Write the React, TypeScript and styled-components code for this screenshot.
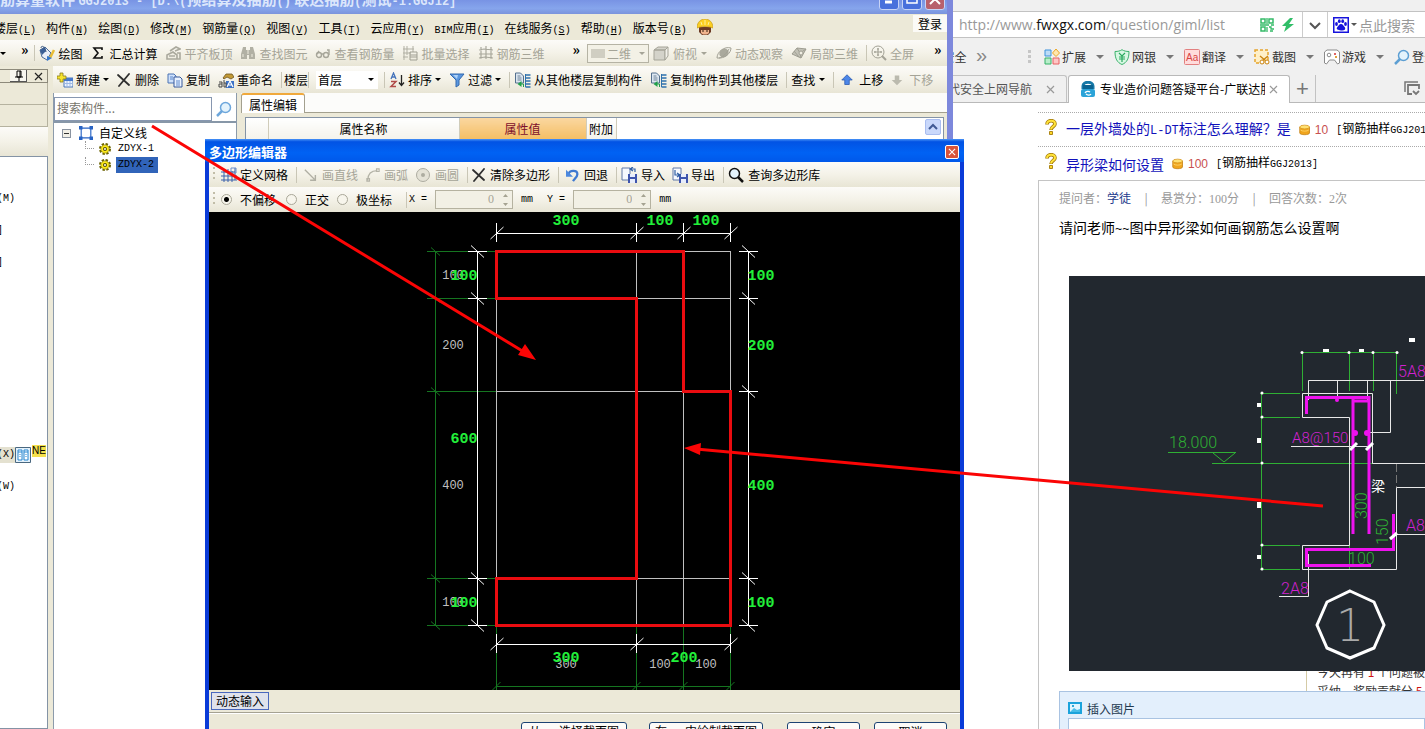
import React from "react";
import styled, { createGlobalStyle, css } from "styled-components";

const cjk = `"Noto Sans CJK SC", sans-serif`;
const mono = `"Liberation Mono", "Noto Sans CJK SC", monospace`;

const GlobalStyle = createGlobalStyle`
  *, *::before, *::after { box-sizing: border-box; }
  body { margin: 0; background: #fff; overflow: hidden; }
  body, button, input, select { font-family: ${cjk}; font-size: 12px; color: #000; }
  button { border: 0; padding: 0; margin: 0; background: none; white-space: nowrap; }
  svg { display: block; flex: none; }
`;

/* ---------- shared parts ---------- */

const Desktop = styled.div`
  position: relative;
  display: flex;
  height: 100vh;
  overflow: hidden;
  line-height: 16px;
  white-space: nowrap;
`;

const Latin = styled.span<{ $size?: number }>`
  font-family: ${mono};
  font-size: ${(p) => p.$size ?? 10}px;
`;

const Digits = styled.span`
  font-family: "Liberation Serif", serif;
`;

const barFill = css`
  background: linear-gradient(#fcfbf8, #f4f2e8 50%, #e8e5d5);
`;

const Toolbar = styled.div<{ $height: number; $left?: number }>`
  ${barFill}
  display: flex;
  align-items: center;
  flex: none;
  height: ${(p) => p.$height}px;
  padding-left: ${(p) => p.$left ?? 4}px;
`;

const ToolButton = styled.button<{ $muted?: boolean; $after?: number; $gap?: number }>`
  display: flex;
  align-items: center;
  flex: none;
  gap: ${(p) => p.$gap ?? 3}px;
  margin-right: ${(p) => p.$after ?? 8}px;
  color: ${(p) => (p.$muted ? "#a5a497" : "#000")};
`;

const Divider = styled.span<{ $after?: number }>`
  flex: none;
  width: 1px;
  height: 16px;
  margin-right: ${(p) => p.$after ?? 4}px;
  background: #c9c6b6;
`;

const Caret = styled.span<{ $color?: string; $wide?: boolean }>`
  flex: none;
  width: 0;
  border: ${(p) => (p.$wide ? 4 : 3)}px solid transparent;
  border-top-color: ${(p) => p.$color ?? "#000"};
  border-bottom: 0;
`;

const More = styled.button<{ $before?: number; $after?: number }>`
  flex: none;
  margin: 0 ${(p) => p.$after ?? 0}px 8px ${(p) => p.$before ?? 0}px;
  font-weight: 700;
  font-size: 14px;
  line-height: 14px;
`;

const Grip = styled.span`
  flex: none;
  width: 2px;
  height: 15px;
  margin-right: 6px;
  background: repeating-linear-gradient(#c1bda8 0 2px, transparent 2px 5px);
`;

/* ---------- icons ---------- */

type IconProps = { children: React.ReactNode; w?: number; h?: number; box?: string };
const Icon = ({ children, w = 16, h = 16, box = "0 0 16 16" }: IconProps) => (
  <svg width={w} height={h} viewBox={box} fill="none" aria-hidden="true">
    {children}
  </svg>
);

const PaintIcon = () => (
  <Icon>
    <path d="M1 5 6 2l6 6-4 7-5-3z" fill="#e8eef8" stroke="#4c6c98" />
    <path d="M1 5 6 2l1 4-4 4z" fill="#3a5f96" />
    <path d="M2 3c0-3 4-2 5 4" stroke="#38557e" />
    <path d="m11 13 4-8" stroke="#e9bd36" strokeWidth="2.500" />
    <path d="m8 11 5 2-5 3z" fill="#3276cb" />
  </Icon>
);
const SigmaIcon = () => (
  <Icon>
    <path d="M12 5V3H4l4 5-4 5h8v-2" stroke="#111" strokeWidth="1.600" />
  </Icon>
);
const AlignTopIcon = () => (
  <Icon>
    <path d="M2 14h10v-4L8 7l-6 3zM5 6l6-4 4 2-5 2M12 8h3v6h-3" stroke="#aaa99d" strokeWidth="1.600" />
    <path d="M4 10h6v2H4z" fill="#bdbcb1" />
  </Icon>
);
const BinocularIcon = () => (
  <Icon>
    <path d="M3 2h3v3h4V2h3l2 7v5H9v-4H7v4H1V9z" fill="#b1b0a4" />
    <path d="M3 9v3M12 9v3M8 5v4" stroke="#eeecdf" />
  </Icon>
);
const GlassesIcon = () => (
  <Icon>
    <circle cx="4" cy="10" r="2.500" stroke="#a7a69a" strokeWidth="1.400" />
    <circle cx="11" cy="10" r="2.500" stroke="#a7a69a" strokeWidth="1.400" />
    <path d="M6 9h3M14 10V5h-2M2 9l2-3" stroke="#a7a69a" strokeWidth="1.400" />
  </Icon>
);
const BatchIcon = () => (
  <Icon>
    <path d="M2 1v14M5 1v9M1 4h11M1 8h8M11 1v6M1 12h5" stroke="#b0afa3" />
    <path d="M8 7h7v8H8zM8 10h7M8 12h7" stroke="#a09f93" />
  </Icon>
);
const RebarIcon = () => (
  <Icon>
    <path d="M3 2v12M8 1v13M13 2v12M1 5l5-1 9 1M1 9h14M1 13l6-1 8 1" stroke="#a9a89c" strokeWidth="1.200" />
  </Icon>
);
const CubeIcon = () => (
  <Icon>
    <path d="m1 5 4-3h10l-3 3zM1 5h11v10H1z" fill="#d4d3ca" stroke="#a5a498" />
    <path d="m12 5 3-3v9l-3 4z" fill="#f1f0e9" stroke="#a5a498" />
  </Icon>
);
const OrbitIcon = () => (
  <Icon>
    <ellipse cx="8" cy="8" rx="5" ry="4" fill="#aaa99d" transform="rotate(-35 8 8)" />
    <path d="M1 13C1 7 8 1 15 3c0 5-6 11-14 10M3 13c4-1 8-5 10-9" stroke="#a2a195" />
  </Icon>
);
const LocalIcon = () => (
  <Icon>
    <path d="m1 9 5-6 9 1-5 9z" fill="#c2c1b6" stroke="#9e9d91" />
    <path d="m6 3 3 5 6-4M9 8l1 5M3 6l5 6" stroke="#a09f93" />
    <circle cx="10" cy="8" r="2" fill="#f0eee3" stroke="#a09f93" />
  </Icon>
);
const FullIcon = () => (
  <Icon>
    <circle cx="7" cy="7" r="6" stroke="#a3a296" />
    <path d="M7 3v8M3 7h8M6 4h2M6 10h2M4 6v2M10 6v2" stroke="#a3a296" strokeWidth="1.200" />
    <path d="m11 11 4 4" stroke="#a3a296" strokeWidth="2" />
  </Icon>
);
const NewIcon = () => (
  <Icon>
    <path d="M7 6h9v9H7z" fill="#edf4ff" stroke="#4a76bb" />
    <path d="M7 6h9v3H7z" fill="#4779cc" />
    <path d="M7 11.500h9M10 9v6M13 9v6" stroke="#9db8e4" />
    <path d="M3 1h3v3h3v3H6v3H3V7H0V4h3z" fill="#f6e32d" stroke="#8b7c1c" strokeWidth=".8" />
  </Icon>
);
const CrossIcon = () => (
  <Icon w={14} h={14} box="1 1 14 14">
    <path d="m2 3 11 10M13 2 3 14" stroke="#2f2f2f" strokeWidth="1.800" strokeLinecap="round" />
  </Icon>
);
const CopyIcon = () => (
  <Icon>
    <path d="M1 2h6l2 2v7H1z" fill="#cfe1fb" stroke="#4b73b3" />
    <path d="M7 5h6l2 2v8H7z" fill="#eaf2ff" stroke="#36599b" />
    <path d="M3 5h3M3 7h3M9 9h4M9 11h4M9 13h4" stroke="#5d88cc" />
  </Icon>
);
const RenameIcon = () => (
  <Icon>
    <path d="M5 6 8 2l6 0 2 3-3 2-4-2-3 2z" fill="#c39a36" stroke="#6c531d" strokeWidth=".8" />
    <path d="M8 9h8v7H8z" fill="#3d73c8" />
    <path d="m9 15 3-6 3 6M10 13h4" stroke="#fff" strokeWidth="1.200" />
    <path d="M1 10h3v5H1v-3h3M6 8v7M6 11h2v4H6" stroke="#474747" />
  </Icon>
);
const SortIcon = () => (
  <Icon>
    <path d="m2 7 2.500-6L7 7M3 5h3" stroke="#4573bb" strokeWidth="1.300" />
    <path d="M2 9.500h5l-5 5h5" stroke="#b04b49" strokeWidth="1.500" />
    <path d="M12.500 3v10M10 10.500l2.500 3 2.500-3" stroke="#222" strokeWidth="1.300" />
  </Icon>
);
const FilterIcon = () => (
  <Icon>
    <path d="M1 2h14l-5 6v5l-3 2V8z" fill="#5b97df" stroke="#3268ae" />
    <path d="M4 3h5L8 7z" fill="#aed2f8" />
  </Icon>
);
const FloorCopyIcon = () => (
  <Icon w={17}>
    <path d="M1 1h5l3 3v7H1z" fill="#dce6f0" stroke="#55708e" />
    <path d="M3 4h3M3 6h4M3 8h4" stroke="#6d8298" />
    <path d="M11 3h5M11 6h5M11 9h5M11 12h5M11 15h5" stroke="#2f71ad" strokeWidth="1.600" />
    <path d="M11 2v13" stroke="#2f71ad" />
    <path d="M7 15V9l-4 3z" fill="#21a04b" />
    <path d="M5 12h4v3" stroke="#21a04b" />
  </Icon>
);
const ArrowIcon = ({ down }: { down?: boolean }) => (
  <Icon w={12} h={12}>
    {down ? (
      <path d="M5 2h6v6h4l-7 7-7-7h4z" fill="#bbbaae" />
    ) : (
      <path d="m8 1 7 7h-4v6H5V8H1z" fill="#4c86e8" stroke="#2556ad" />
    )}
  </Icon>
);
const WorkerIcon = () => (
  <Icon>
    <path d="M2 8h12v5l-3 3H5l-3-3z" fill="#6b3a24" />
    <path d="M4 11h8v3l-2 1.500H6L4 14z" fill="#f0b48d" />
    <path d="M0 9c0-12 16-12 16 0-5-2-11-2-16 0z" fill="#fbcf22" stroke="#c79a14" strokeWidth=".7" />
    <path d="M8 1v5M4 3l1 3M12 3l-1 3" stroke="#fdf09b" />
    <path d="M6 11v2M10 11v2" stroke="#321" />
  </Icon>
);
const MagnifierIcon = ({ color = "#111", handle = "right" }: { color?: string; handle?: string }) => (
  <Icon>
    <g transform={handle === "left" ? "matrix(-1 0 0 1 16 0)" : undefined}>
      <circle cx="6.500" cy="6.500" r="5" fill="#e4f3fc" stroke={color} strokeWidth="1.500" />
      <path d="m10 10 5 5" stroke={color} strokeWidth="2.500" />
    </g>
  </Icon>
);
const GearIcon = () => (
  <Icon w={12} h={12}>
    <circle cx="8" cy="8" r="6.500" stroke="#6b6200" strokeWidth="3" strokeDasharray="3.100 2" />
    <circle cx="8" cy="8" r="5.500" fill="#ffec1c" stroke="#8a7f00" strokeWidth=".8" />
    <circle cx="8" cy="8" r="2" fill="#fff" stroke="#554d00" strokeWidth="1.400" />
  </Icon>
);
const NodeBoxIcon = () => (
  <Icon w={14} h={14}>
    <path d="M2.500 2.500h11v11h-11z" stroke="#2763c4" strokeWidth="1.300" />
    <path d="M0 0h4v4H0zM12 0h4v4h-4zM0 12h4v4H0zM12 12h4v4h-4z" fill="#2763c4" />
  </Icon>
);
const GridIcon = () => (
  <Icon>
    <path d="M3 2v13M7 2v13M11 4v11M14 1v12M0 5h14M0 9h16M0 13h16" stroke="#3b61a9" />
    <path d="M10 1h5v5h-5z" stroke="#6a8cc9" />
  </Icon>
);
const LineToolIcon = () => (
  <Icon w={14} h={14}>
    <path d="m1 2 11 11M13 8v6H7" stroke="#b0afa3" strokeWidth="1.600" />
  </Icon>
);
const ArcToolIcon = () => (
  <Icon w={14} h={14}>
    <path d="M2 14C2 7 6 3 13 3M1 12h3v3H1zM12 1h3v3h-3z" stroke="#b4b3a7" strokeWidth="1.300" />
  </Icon>
);
const CircleToolIcon = () => (
  <Icon>
    <circle cx="8" cy="8" r="6.500" fill="#e4e2d6" stroke="#adaca0" />
    <circle cx="8" cy="8" r="2" fill="#adaca0" />
  </Icon>
);
const UndoIcon = () => (
  <Icon w={14} h={14}>
    <path d="M3 7c1-5 10-5 10 0 0 3-3 5-5 8" stroke="#3f79d0" strokeWidth="2.600" />
    <path d="M0 2v8h8z" fill="#4c88de" />
  </Icon>
);
const DiskIcon = ({ out }: { out?: boolean }) => (
  <Icon>
    <path d="M1 1h8v12H1z" fill="#f6f9ff" stroke="#6079a8" />
    <path d="M7 7h9v9H7z" fill="#3e54ad" />
    <path d="M9 7h5v3H9zM9 12h5v4H9z" fill="#e8edfb" />
    <path d={out ? "M3 3v5h4M5 6l3 2-3 2" : "M14 5V2h-4M12 0l-3 2 3 2"} stroke="#315fa5" strokeWidth="1.200" />
  </Icon>
);
const QuestionIcon = () => (
  <Icon w={12} h={16} box="0 0 12 16">
    <g strokeLinejoin="round">
      <path d="M2 5.500C2 .5 10 .5 10 5c0 2.500-4 2.500-4 6" stroke="#a47b08" strokeWidth="3.600" />
      <path d="M2 5C2.500.8 10 .8 10 5c0 2.500-4 2.500-4 5.500" stroke="#ffe23a" strokeWidth="2" />
    </g>
    <path d="M4.500 12.500h3v3h-3z" fill="#ffd928" stroke="#a47b08" strokeWidth=".9" />
  </Icon>
);
const CoinIcon = () => (
  <Icon w={12} h={12}>
    <path d="M1 4v8c0 3 13 3 13 0V4z" fill="#f0a51d" stroke="#c27c0e" />
    <ellipse cx="7.500" cy="4" rx="6.500" ry="2.500" fill="#ffe071" stroke="#d6941b" />
    <path d="M2 8c2 2 9 2 11 0" stroke="#ffdc78" />
  </Icon>
);
const QrIcon = () => (
  <Icon w={14} h={14} box="0 0 14 14">
    <path d="M1 1h4v4H1zM9 1h4v4H9zM1 9h4v4H1z" stroke="#35ba68" strokeWidth="1.500" />
    <path d="M7 0v6M0 7h9M7 9v5M9 9h2v2h3M10 13h3M11 7h3" stroke="#35ba68" strokeWidth="1.300" />
  </Icon>
);
const BoltIcon = () => (
  <Icon w={14} h={14} box="0 0 14 14">
    <path d="M9 0 1 8h4l-2 6 10-8H8l4-6z" fill="#31be68" />
  </Icon>
);
const ChevronIcon = () => (
  <Icon w={14} h={14} box="0 0 14 14">
    <path d="m2 5 5 5 5-5" stroke="#555" strokeWidth="2" />
  </Icon>
);
const PawIcon = () => (
  <Icon>
    <path d="M.75.75h14.500v14.500H.75z" fill="#fff" stroke="#1713dc" strokeWidth="1.500" />
    <g fill="#1713dc">
      <ellipse cx="3.500" cy="7" rx="1.400" ry="1.900" />
      <ellipse cx="6.300" cy="4.200" rx="1.400" ry="1.900" />
      <ellipse cx="9.700" cy="4.200" rx="1.400" ry="1.900" />
      <ellipse cx="12.500" cy="7" rx="1.400" ry="1.900" />
      <path d="M8 7c2 0 2.500 2 4 3.500 1 2-1 3.500-4 3s-5-1-4-3C5.500 9 6 7 8 7z" />
    </g>
  </Icon>
);
const ExtendIcon = () => (
  <Icon>
    <path d="M1 1h6v6H1z" fill="#bcdcf7" stroke="#3c93dc" />
    <path d="M1 9h6v6H1z" fill="#b8edca" stroke="#35b266" />
    <path d="M9 9h6v6H9z" fill="#ffc6c6" stroke="#e66262" />
    <path d="m12 0 3.500 4L12 7.500 8.500 4z" fill="#ffe7ae" stroke="#eaa627" />
  </Icon>
);
const BankIcon = () => (
  <Icon>
    <path d="M8 .7c2 1.300 4 1.800 7 1.800 0 7-2 11-7 13C3 13.500 1 9.500 1 2.500 4 2.500 6 2 8 .7z" fill="#d8f7e3" stroke="#3bb36c" />
    <path d="m5 4 3 3 3-3M8 7v6M5 8h6M5 10h6" stroke="#2aa95e" strokeWidth="1.200" />
  </Icon>
);
const TranslateIcon = () => (
  <Icon>
    <rect x=".5" y=".5" width="15" height="15" rx="1" fill="#ffdcdc" stroke="#e28080" />
    <text x="2" y="12" fontFamily="Liberation Sans" fontSize="10" fill="#d84444">Aa</text>
  </Icon>
);
const CropIcon = () => (
  <Icon>
    <path d="M1 1h13v13H1z" fill="#fff0c8" stroke="#e5a42c" strokeDasharray="3 2" strokeWidth="1.500" />
    <path d="m6 7 6 5M14 7l-6 5" stroke="#cb8511" strokeWidth="1.400" />
    <circle cx="8" cy="13" r="2" fill="#fff" stroke="#cb8511" />
    <circle cx="13" cy="13" r="2" fill="#fff" stroke="#cb8511" />
  </Icon>
);
const GameIcon = () => (
  <Icon>
    <path d="M3 1h10l2.500 2v11l-2 1-3-4h-5l-3 4-2-1V3z" fill="#fff" stroke="#8b8b8b" />
    <circle cx="5" cy="6" r="1.800" stroke="#8b8b8b" />
    <path d="M10 4h2v2h-2z" fill="#e06464" />
    <path d="M11 7h2v2h-2z" fill="#e4a13b" />
  </Icon>
);
const SiteIcon = () => (
  <Icon>
    <path d="M3 8V5c0-5 10-5 10 0v3" stroke="#1679a8" strokeWidth="3" />
    <path d="M3 4h10v5H3z" fill="#0b6492" />
    <rect x="1" y="8" width="14" height="8" rx="2" fill="#2ba3d8" />
    <path d="M5 12c1-2 4-2 5-1M11 13c-1 2-4 1-5 0" stroke="#fff" strokeWidth="1.200" />
  </Icon>
);
const TabListIcon = () => (
  <Icon>
    <path d="M1 11V1h13" stroke="#777" strokeWidth="1.500" />
    <path d="M8 13H4V4h11v4" stroke="#777" strokeWidth="1.800" />
    <path d="m9 10 3 3 3-3" stroke="#777" strokeWidth="1.800" />
  </Icon>
);
const PictureIcon = () => (
  <Icon w={14} h={12} box="0 0 14 12">
    <path d="M1 1h12v10H1z" fill="#dff5ff" stroke="#1ba3dc" strokeWidth="2" />
    <path d="m2 10 4-4 3 2 3-1v3z" fill="#48bde9" />
    <path d="M4 3h2v2H4z" fill="#2ca7d8" />
  </Icon>
);
const PinIcon = () => (
  <Icon w={10} h={12} box="0 0 10 12">
    <path d="M3 1h4v6H3zM1 7h8M5 7v4M6 1v6" stroke="#000" />
  </Icon>
);
const SmallCross = ({ color = "#222", size = 9 }: { color?: string; size?: number }) => (
  <Icon w={size} h={size} box="0 0 9 9">
    <path d="m1 1 7 7M8 1 1 8" stroke={color} strokeWidth="1.200" />
  </Icon>
);
const LibraryIcon = () => (
  <Icon>
    <path d="M.5.5h15v15H.5z" fill="#e3f1fb" stroke="#49677f" />
    <path d="M3 3h4v10H3zM9 3h4v10H9z" fill="#fff" stroke="#2585d0" />
    <path d="M3 5h4M9 5h4M5 7v1M5 9v1M11 7v1M11 9v1" stroke="#2585d0" />
  </Icon>
);

/* ---------- main window ---------- */

const MainWindow = styled.section`
  display: flex;
  flex-direction: column;
  flex: none;
  width: 953px;
  background: #ece9d8;
  border-right: 6px solid #7d88dc;
  overflow: hidden;
`;

const TitleBar = styled.header`
  display: flex;
  align-items: flex-end;
  flex: none;
  height: 14px;
  margin-right: -6px;
  padding-right: 8px;
  overflow: hidden;
  background: linear-gradient(#7893e4, #86a5ec 60%, #7a93dc);
  color: #dbe6fb;
  font-size: 15px;
  font-weight: 700;
  line-height: 20px;
`;

const TitleText = styled.span`
  flex: 1;
  padding-bottom: 2px;
`;

const FrameButton = styled.button<{ $danger?: boolean }>`
  display: flex;
  align-items: flex-end;
  justify-content: center;
  width: 20px;
  height: 20px;
  margin: 0 0 4px 3px;
  padding-bottom: 4px;
  border: 1px solid #c7d3f6;
  border-radius: 3px;
  background: ${(p) => (p.$danger ? "#b8606c" : "#4870dc")};
`;

const MenuBar = styled.nav`
  display: flex;
  align-items: center;
  flex: none;
  gap: 10px;
  height: 26px;
  margin-left: -6px;
`;

const SignIn = styled.button`
  align-self: stretch;
  margin: 1px 0 8px auto;
  padding: 0 5px;
  background: #fbfaf6;
`;

const ViewSelect = styled.select`
  appearance: none;
  width: 62px;
  height: 19px;
  margin-right: 4px;
  padding: 0 0 0 19px;
  border: 1px solid #b5b3a4;
  background: linear-gradient(#d0cec2, #d0cec2) 3px 4px / 14px 9px no-repeat, #f3f1e6;
  color: #a5a497;
  opacity: 1;
`;

const SelectWrap = styled.span<{ $after?: number }>`
  display: flex;
  align-items: center;
  flex: none;
  position: relative;
  margin-right: ${(p) => p.$after ?? 0}px;
`;

const SelectCaret = styled.span<{ $right?: number }>`
  position: absolute;
  right: ${(p) => p.$right ?? 4}px;
  display: flex;
  pointer-events: none;
`;

const FloorSelect = styled.select`
  appearance: none;
  width: 62px;
  height: 18px;
  padding: 0 2px;
  border: 0;
  background: #fff;
`;

const Workspace = styled.div`
  display: flex;
  flex: 1;
  min-height: 0;
`;

const Dock = styled.aside`
  display: flex;
  flex-direction: column;
  width: 48px;
  margin-right: 5px;
  padding-top: 3px;
`;

const DockHead = styled.div`
  display: flex;
  align-items: center;
  justify-content: flex-end;
  gap: 7px;
  height: 14px;
  padding-right: 4px;
  border: 1px solid #8d8a7b;
  border-left: 0;
`;

const DockPin = styled.button`
  width: 17px;
  height: 12px;
  padding-left: 4px;
  border: 1px solid #555;
  border-width: 0 1px 1px 0;
  background: #f7f6ef;
`;

const DockStrip = styled.div`
  height: 22px;
  border: 1px solid #b5b29f;
  border-width: 0 1px 1px 0;
`;

const DockBand = styled.div`
  ${barFill}
  height: 29px;
`;

const DockList = styled.ul`
  flex: 1;
  margin: 0;
  padding: 26px 0 0;
  list-style: none;
  background: #fff;
  border: 1px solid #8493a5;
  border-left: 0;
  overflow: hidden;
`;

const DockItem = styled.li<{ $active?: boolean }>`
  display: flex;
  align-items: center;
  height: 32px;
  & > span:first-child {
    width: 18px;
    margin-left: -3px;
    background: ${(p) => (p.$active ? "#e4e1d0" : "transparent")};
  }
`;

const NewBadge = styled.b`
  align-self: flex-start;
  margin: 6px 0 0 1px;
  background: #f5e04c;
  font: 10px/12px "Liberation Sans", sans-serif;
`;

const Editor = styled.div`
  display: flex;
  flex-direction: column;
  flex: 1;
  min-width: 0;
`;

const Panels = styled.div`
  display: flex;
  flex: 1;
  min-height: 0;
`;

const TreePanel = styled.div`
  width: 184px;
  padding-top: 4px;
  background: #fff;
  border: 1px solid #8c9bab;
  border-width: 0 1px;
`;

const SearchRow = styled.form`
  display: flex;
  align-items: center;
  gap: 4px;
  height: 26px;
  border-bottom: 2px solid #8797a8;
`;

const SearchInput = styled.input`
  width: 158px;
  height: 24px;
  padding: 0 2px 4px;
  border: 1px solid #8797b0;
  outline: 0;
  &::placeholder { color: #77756c; opacity: 1; }
`;

const Tree = styled.ul`
  margin: 0;
  padding: 0 0 0 8px;
  list-style: none;
`;

const TreeRoot = styled.div`
  display: flex;
  align-items: center;
  height: 18px;
  padding-top: 2px;
`;

const Expander = styled.button`
  width: 9px;
  height: 9px;
  margin-right: 8px;
  border: 1px solid #8a93a0;
  background: linear-gradient(#333, #333) center / 5px 1px no-repeat, #f1efe6;
`;

const RootLabel = styled.span`
  margin-left: 6px;
`;

const Branch = styled.ul`
  margin: 0 0 0 23px;
  padding: 0;
  list-style: none;
`;

const Leaf = styled.li`
  display: flex;
  align-items: center;
  height: 16px;
  gap: 5px;
  &::before {
    content: "";
    width: 9px;
    height: 8px;
    align-self: flex-start;
    border: 1px dotted #999;
    border-width: 0 0 1px 1px;
  }
`;

const LeafName = styled.span<{ $selected?: boolean }>`
  padding: 0 4px 0 2px;
  font: 10px/16px ${mono};
  background: ${(p) => (p.$selected ? "#3164b9" : "transparent")};
`;

const PropertyPanel = styled.div`
  display: flex;
  flex-direction: column;
  flex: 1;
  margin-left: 4px;
`;

const TabStrip = styled.div`
  display: flex;
  height: 20px;
  background: #fcfcfa;
  border-bottom: 1px solid #a3a08f;
`;

const Tab = styled.button`
  height: 20px;
  padding: 0 7px;
  background: #fff;
  border: 1px solid #a3a08f;
  border-top: 2px solid #f0a93c;
  border-bottom: 0;
  border-radius: 3px 3px 0 0;
`;

const SheetFrame = styled.div`
  display: flex;
  justify-content: space-between;
  align-items: flex-start;
  flex: 1;
  margin: 4px 3px 0 4px;
  padding-right: 2px;
  background: #fff;
  border: 1px solid #8493a5;
`;

const Sheet = styled.table`
  border-collapse: collapse;
  table-layout: fixed;
  width: 370px;
`;

const HeadCell = styled.th<{ $w: number; $hot?: boolean }>`
  width: ${(p) => p.$w}px;
  height: 22px;
  padding: 0;
  font-weight: 400;
  border-right: 1px solid #d0ccba;
  color: ${(p) => (p.$hot ? "#7d0f2c" : "#000")};
  background: ${(p) => (p.$hot ? "linear-gradient(#fad7a0, #f4bd62)" : "linear-gradient(#fff, #f4f2ea)")};
`;

const ScrollUp = styled.button`
  display: flex;
  align-items: center;
  justify-content: center;
  width: 16px;
  height: 16px;
  margin-top: 1px;
  border: 1px solid #a9bdf0;
  border-radius: 2px;
  background: #c9d8fb;
`;

/* ---------- polygon dialog ---------- */

const Dialog = styled.section`
  position: absolute;
  left: 205px;
  top: 139px;
  bottom: 0;
  width: 759px;
  display: flex;
  flex-direction: column;
  background: #ece9d8;
  border: 4px solid #0a3bd8;
  border-width: 0 4px;
`;

const DialogTitle = styled.header`
  display: flex;
  align-items: center;
  justify-content: space-between;
  flex: none;
  height: 23px;
  margin: 0 -4px;
  padding: 2px 5px 0 4px;
  background: linear-gradient(#4a94f7, #0253e4 12%, #0062f4 60%, #0058ea);
  color: #fff;
  font-size: 13px;
  font-weight: 700;
`;

const CloseButton = styled.button`
  display: flex;
  align-items: center;
  justify-content: center;
  width: 14px;
  height: 14px;
  border: 1px solid #fff;
  border-radius: 2px;
  background: #d9533a;
`;

const Choice = styled.label<{ $after: number }>`
  display: flex;
  align-items: center;
  gap: 8px;
  margin-right: ${(p) => p.$after}px;
`;

const Radio = styled.input`
  appearance: none;
  width: 11px;
  height: 11px;
  margin: 0;
  border: 1px solid #a9a798;
  border-radius: 50%;
  background: #f7f5ec;
  &:checked {
    background: radial-gradient(circle, #000 0 2px, #f7f5ec 3px);
  }
`;

const Field = styled.label`
  display: flex;
  align-items: center;
  gap: 8px;
  margin-right: 14px;
  white-space: pre;
`;

const Spin = styled.span`
  display: flex;
  align-items: center;
  width: 78px;
  height: 19px;
  padding-right: 3px;
  border: 1px solid #b5b2a0;
  background: #f2f0e5;
`;

const SpinInput = styled.input`
  flex: 1;
  min-width: 0;
  height: 16px;
  padding: 0 8px 0 0;
  border: 0;
  background: none;
  color: #a5a497;
  text-align: right;
  font-family: "Liberation Serif", serif;
`;

const Drawing = styled.div`
  flex: 1 1 477px;
  min-height: 0;
  max-height: 478px;
  overflow: hidden;
  background: #000;
`;

const StatusRow = styled.div`
  flex: none;
  height: 23px;
  padding: 2px;
  border-bottom: 1px solid #a5a292;
  box-shadow: 0 1px #fff;
`;

const DynamicInput = styled.button`
  height: 18px;
  padding: 0 4px;
  border: 1px solid #4a68bd;
  background: #dfe2ec;
  line-height: 16px;
`;

const ActionRow = styled.div`
  display: flex;
  justify-content: flex-end;
  flex: none;
  height: 16px;
  padding: 9px 13px 0 0;
  overflow: hidden;
`;

const ActionButton = styled.button<{ $w: number; $after?: number }>`
  width: ${(p) => p.$w}px;
  height: 20px;
  margin-right: ${(p) => p.$after ?? 0}px;
  border: 1px solid #1c4373;
  border-radius: 3px;
  background: #fcfbf8;
  line-height: 16px;
`;

/* ---------- browser ---------- */

const Browser = styled.section`
  display: flex;
  flex-direction: column;
  flex: 1;
  min-width: 0;
  background: #fff;
  overflow: hidden;
`;

const Chrome = styled.div`
  flex: none;
  padding-top: 11px;
  background: #f0f0f0;
`;

const AddressBar = styled.div`
  display: flex;
  align-items: center;
  height: 27px;
  padding-left: 6px;
  background: #fff;
  border: 1px solid #c2c2c2;
  border-width: 1px 0;
`;

const Url = styled.span`
  flex: none;
  width: 301px;
  font: 14px/20px "Open Sans", sans-serif;
  color: #999;
  & > b { font-weight: 400; color: #111; }
`;

const BarLine = styled.span`
  align-self: stretch;
  width: 1px;
  margin: 0 5px;
  background: #ccc;
`;

const BarButton = styled.button<{ $after: number }>`
  flex: none;
  margin-right: ${(p) => p.$after}px;
`;

const Prompt = styled.span`
  margin-left: 2px;
  font-size: 14px;
  color: #999;
`;

const Bookmarks = styled.div`
  display: flex;
  align-items: center;
  height: 37px;
  color: #333;
`;

const BookmarkTail = styled.button`
  flex: none;
  width: 25px;
  margin-left: -11px;
  color: #333;
`;

const Chevrons = styled.button`
  flex: none;
  width: 52px;
  margin-left: 9px;
  text-align: left;
  font: 20px/20px "Liberation Sans", sans-serif;
  color: #888;
  padding-bottom: 4px;
`;

const Bookmark = styled.button`
  display: flex;
  align-items: center;
  flex: none;
  width: 70px;
  gap: 2px;
  color: #333;
  & > span:last-child { margin-left: 8px; }
`;

const Dots = styled.span`
  flex: none;
  width: 3px;
  height: 13px;
  margin-right: 13px;
  background: repeating-linear-gradient(#c6c6c6 0 3px, transparent 3px 5px);
`;

const Tabs = styled.div`
  display: flex;
  align-items: center;
  height: 28px;
  border-bottom: 1px solid #b9b9b9;
`;

const BackTab = styled.div`
  display: flex;
  align-items: center;
  align-self: stretch;
  justify-content: space-between;
  width: 114px;
  padding-right: 11px;
  border: 1px solid #c2c2c2;
  border-width: 1px 1px 0 0;
  border-radius: 0 3px 0 0;
  color: #555;
  & > span { margin-left: -5px; }
`;

const FrontTab = styled.div`
  display: flex;
  align-items: center;
  width: 222px;
  height: 28px;
  margin-left: 1px;
  padding: 0 11px;
  gap: 4px;
  background: #fff;
  border: 1px solid #b9b9b9;
  border-bottom: 0;
  border-radius: 3px 3px 0 0;
`;

const TabTitle = styled.span`
  flex: 1;
  overflow: hidden;
`;

const AddTab = styled.button`
  width: 26px;
  height: 27px;
  border-right: 1px solid #c2c2c2;
  font: 22px/24px "Liberation Sans", sans-serif;
  color: #777;
`;

const TabList = styled.button`
  margin: 0 5px 0 auto;
`;

const Page = styled.main`
  display: flex;
  flex-direction: column;
  flex: 1;
  min-height: 0;
  margin-left: 85px;
  padding-top: 9px;
`;

const Question = styled.div`
  display: flex;
  align-items: center;
  flex: none;
  height: 34px;
  padding-left: 7px;
  border-top: 1px dotted #aaa;
  & > * { flex: none; }
  & > svg:first-child { margin-bottom: 6px; }
`;

const QuestionLink = styled.a`
  margin: 0 8px 0 9px;
  font-size: 14px;
  color: #1111bb;
  text-decoration: none;
`;

const Points = styled.span`
  margin: 0 8px 0 4px;
  font-family: "Liberation Sans", sans-serif;
  color: #c85050;
`;

const Detail = styled.article`
  display: flex;
  flex-direction: column;
  flex: 1;
  min-height: 0;
  padding: 9px 0 0 20px;
  border: 1px solid #c4c4c4;
  border-width: 1px 0 0 1px;
`;

const Meta = styled.p`
  flex: none;
  margin: 0;
  color: #999;
  & > a { color: #223a8c; text-decoration: none; }
  & > i {
    display: inline-block;
    width: 30px;
    font-style: normal;
    text-align: center;
  }
`;

const Body = styled.p`
  flex: none;
  margin: 10px 0 0;
  font-size: 14px;
  line-height: 20px;
`;

const Figure = styled.figure`
  flex: none;
  height: 395px;
  margin: 36px 0 0 10px;
  overflow: hidden;
  background: #22282f;
`;

const Notice = styled.aside`
  align-self: flex-end;
  flex: none;
  width: 119px;
  height: 20px;
  padding-left: 10px;
  overflow: hidden;
  border-left: 1px solid #d5cba6;
  color: #333;
  line-height: 17px;
  & > div { margin-top: -8px; }
  & > div + div { margin-top: 2px; }
  & b { font-weight: 400; color: #d01414; }
`;

const Reply = styled.div`
  flex: 1;
  padding: 0 0 0 8px;
  background: #e3effc;
  border: 1px solid #a9c3e2;
  border-width: 1px 0 0 1px;
`;

const InsertPicture = styled.button`
  display: flex;
  align-items: center;
  gap: 5px;
  height: 32px;
  color: #243a50;
`;

const ReplyBox = styled.div`
  height: 40px;
  margin-top: -6px;
  background: #fff;
  border: 1px solid #a9c3e2;
`;

const Annotations = styled.svg`
  position: absolute;
  left: 0;
  top: 0;
  pointer-events: none;
`;

/* ---------- drawings ---------- */

const XS = [496.5, 636.5, 683.5, 730.5];
const YS = [251.5, 298.5, 391.5, 578.5, 625.5];

const green: [number, number, string][] = [
  [566, 225, "300"], [660, 225, "100"], [706, 225, "100"],
  [464, 280, "100"], [464, 443, "600"], [464, 607, "100"],
  [761, 280, "100"], [761, 350, "200"], [761, 490, "400"], [761, 607, "100"],
  [566, 662, "300"], [684, 662, "200"],
];
const grey: [number, number, string][] = [
  [453, 279, "100"], [453, 349, "200"], [453, 489, "400"], [453, 606, "100"],
  [566, 668, "300"], [660, 668, "100"], [706, 668, "100"],
];

const PolygonDrawing = () => (
  <svg width="751" height="478" viewBox="209 212 751 478" fill="none">
    <g fill="#c0c0c0" fontFamily="Liberation Mono" fontSize="12" textAnchor="middle">
      {grey.map(([x, y, t]) => <text key={`${x}-${y}`} x={x} y={y}>{t}</text>)}
    </g>
    <g stroke="#157520">
      {XS.map((x) => <path key={x} d={`M${x} 626V690M${x - 4} 690l8-8`} />)}
      {YS.map((y) => <path key={y} d={`M427 ${y}H496M431 ${y - 4}l9 8`} />)}
      <path d="M435.500 251V626M496 686.500H731" />
    </g>
    <g stroke="#c0c0c0">
      {XS.map((x) => <path key={x} d={`M${x} 251V626`} />)}
      {YS.map((y) => <path key={y} d={`M496 ${y}H731`} />)}
    </g>
    <g stroke="#fff">
      <path d="M496 233.500H731M496 644.500H731M477.500 251V626M748.500 251V626" />
      {XS.map((x) => <path key={x} d={`M${x} 223V242M${x - 6} 239l13-12`} />)}
      {[496.5, 636.5, 730.5].map((x) => <path key={x} d={`M${x} 634V653M${x - 6} 650l13-12`} />)}
      {YS.map((y) => <path key={y} d={`M739 ${y}H758M742 ${y - 6}l13 12`} />)}
      {[251.5, 298.5, 578.5, 625.5].map((y) => <path key={y} d={`M468 ${y}H487M471 ${y - 6}l13 12`} />)}
    </g>
    <path
      d="M496.500 251.500H683.500V391.500H730.500V625.500H496.500V578.500H636.500V298.500H496.500Z"
      stroke="#ea0c10"
      strokeWidth="3"
    />
    <g fill="#22f03a" fontFamily="Liberation Mono" fontSize="15" fontWeight="700" textAnchor="middle">
      {green.map(([x, y, t]) => <text key={`${x}-${y}`} x={x} y={y}>{t}</text>)}
    </g>
  </svg>
);

const BeamDrawing = () => (
  <svg width="356" height="395" viewBox="1069 278 356 395" fill="none">
    <g stroke="#2fb034">
      <path d="M1302 354.500H1397M1302.500 354V393M1349.500 354V393M1373.500 354V393M1396.500 354V396" />
      <path d="M1261.500 395V572M1260 395.500H1300M1260 419.500H1300M1260 547.500H1300M1260 571.500H1300" />
      <path d="M1168 454.500H1236M1213 455l11 9 11-9M1212 465.500H1373" />
      <path d="M1349.500 547V572" />
    </g>
    <g stroke="#e8e8e8">
      <path d="M1302.500 395.500H1372.500V465.500H1425M1302.500 395.500V419.500H1349.500V547.500H1302.500V571.500H1396.500V489.500H1425" />
      <path d="M1308.500 402V382.500H1424M1337.500 382V402M1367.500 382V402M1390.500 382V434.500H1368" />
      <path d="M1291 448.500H1371M1393 536.500H1425M1308.500 556V598.500H1279" />
      <path d="M1396.500 466V489" stroke="#777" strokeDasharray="8 3" />
    </g>
    <g stroke="#ee12ee" strokeWidth="3">
      <path d="M1306.500 416V399.500H1369V536M1353 400V536M1353 403H1369" />
      <path d="M1371 567.500H1306.500V551.500H1393.500V516" />
    </g>
    <g fill="#ee12ee">
      <circle cx="1355" cy="435" r="3" />
      <circle cx="1367" cy="435" r="3" />
      <circle cx="1337" cy="402" r="2" />
    </g>
    <path d="m1350 452 7-7m9 7 7-7m17 96 7-6" stroke="#fff" strokeWidth="3" />
    <g fill="#fff">
      <path d="M1323 351h6v3h-6zM1359 351h5v3h-5zM1409 340h6v4h-6zM1257 405h4v4h-4zM1257 440h4v5h-4zM1257 504h4v6h-4zM1257 557h4v4h-4z" />
      {[1302, 1349, 1373, 1397].map((x) => <circle key={x} cx={x} cy="354.500" r="1.500" />)}
      {[395, 419, 465, 547, 571].map((y) => <circle key={y} cx="1262" cy={y} r="1.500" />)}
    </g>
    <g fontFamily="Roboto, Liberation Sans" fontWeight="300" fontSize="16">
      <g fill="#d022d0">
        <text x="1398" y="379">5A8</text>
        <text x="1292" y="445" fontSize="15">A8@150</text>
        <text x="1406" y="533">A8</text>
        <text x="1281" y="596">2A8</text>
      </g>
      <g fill="#2fb034">
        <text x="1169" y="450">18.000</text>
        <text x="1348" y="566">100</text>
        <text transform="translate(1367 521) rotate(-90)">300</text>
        <text transform="translate(1388 547) rotate(-90)">150</text>
      </g>
    </g>
    <text x="1371" y="493" fontFamily="Noto Sans CJK SC" fontSize="14" fill="#fff">梁</text>
    <path d="m1350 593 24 11 10 23-10 23-24 10-23-10-10-23 10-23z" stroke="#fff" strokeWidth="3" />
    <text x="1350" y="643" textAnchor="middle" fontFamily="DejaVu Sans Light, DejaVu Sans" fontWeight="200" fontSize="44" fill="#aaa">1</text>
  </svg>
);

/* ---------- content ---------- */

const menus: [string, string, string?][] = [
  ["楼层", "L"], ["构件", "N"], ["绘图", "D"], ["修改", "M"], ["钢筋量", "Q"], ["视图", "V"],
  ["工具", "T"], ["云应用", "Y"], ["应用", "I", "BIM"], ["在线服务", "S"], ["帮助", "H"], ["版本号", "B"],
];

const drawTools: [string, () => React.ReactElement, boolean][] = [
  ["绘图", PaintIcon, false], ["汇总计算", SigmaIcon, false], ["平齐板顶", AlignTopIcon, true],
  ["查找图元", BinocularIcon, true], ["查看钢筋量", GlassesIcon, true],
  ["批量选择", BatchIcon, true], ["钢筋三维", RebarIcon, true],
];

const bookmarks: [string, React.ReactElement][] = [
  ["扩展", <ExtendIcon />], ["网银", <BankIcon />], ["翻译", <TranslateIcon />],
  ["截图", <CropIcon />], ["游戏", <GameIcon />],
  ["登录", <MagnifierIcon color="#5d9fd3" handle="left" />],
];

const dockRows = ["(M)", " ]", " ]", "", "", "", "", "", "(X)", "(W)"];

const SpinField = ({ label }: { label: string }) => (
  <Field>
    <Latin>{label} =</Latin>
    <Spin>
      <SpinInput defaultValue="0" disabled aria-label={label} />
      <Icon w={7} h={14} box="0 0 7 14">
        <path d="m1 4 2.500-3L6 4zM1 10l2.500 3L6 10z" fill="#a5a392" />
      </Icon>
    </Spin>
    <Latin>mm</Latin>
  </Field>
);

const App = () => (
  <Desktop>
    <GlobalStyle />
    <MainWindow>
      <TitleBar>
        <TitleText>
          筋算量软件 <Latin $size={12}>GGJ2013 - [D:\(</Latin>预结算及抽筋<Latin $size={12}>()</Latin> 联达抽筋
          <Latin $size={12}>(</Latin>测试<Latin $size={12}>-1.GGJ12]</Latin>
        </TitleText>
        <FrameButton aria-label="最小化">
          <Icon w={12} h={12} box="0 0 12 12"><path d="M2 9h7" stroke="#fff" strokeWidth="3" /></Icon>
        </FrameButton>
        <FrameButton aria-label="最大化">
          <Icon w={12} h={12} box="0 0 12 12"><path d="M1 1h10v9H1z" stroke="#fff" strokeWidth="1.500" /></Icon>
        </FrameButton>
        <FrameButton $danger aria-label="关闭">
          <Icon w={12} h={12} box="0 0 12 12"><path d="m1 1 10 10M11 1 1 11" stroke="#fff" strokeWidth="2" /></Icon>
        </FrameButton>
      </TitleBar>
      <MenuBar>
        {menus.map(([name, key, prefix]) => (
          <button key={key}>
            {prefix && <Latin>{prefix}</Latin>}
            {name}
            <Latin>(<u>{key}</u>)</Latin>
          </button>
        ))}
        <WorkerIcon />
        <SignIn>登录</SignIn>
      </MenuBar>
      <Toolbar $height={26} $left={0}>
        <Caret />
        <More $before={15} $after={6}>»</More>
        <Divider />
        {drawTools.map(([name, Glyph, muted]) => (
          <ToolButton key={name} $muted={muted}><Glyph />{name}</ToolButton>
        ))}
        <More $before={20} $after={7}>»</More>
        <SelectWrap>
          <ViewSelect aria-label="视图" defaultValue="二维" disabled><option>二维</option></ViewSelect>
          <SelectCaret $right={8}><Caret $color="#a5a497" /></SelectCaret>
        </SelectWrap>
        <ToolButton $muted $gap={4} $after={9}><CubeIcon />俯视<Caret $color="#a5a497" /></ToolButton>
        <ToolButton $muted><OrbitIcon />动态观察</ToolButton>
        <ToolButton $muted><LocalIcon />局部三维</ToolButton>
        <Divider />
        <ToolButton $muted $after={20}><FullIcon />全屏</ToolButton>
        <More>»</More>
      </Toolbar>
      <Workspace>
        <Dock>
          <DockHead>
            <DockPin aria-label="固定"><PinIcon /></DockPin>
            <button aria-label="关闭面板"><SmallCross /></button>
          </DockHead>
          <DockStrip />
          <DockStrip />
          <DockBand />
          <DockList>
            {dockRows.map((row, i) => (
              <DockItem key={i} $active={row === "(X)"}>
                <Latin>{row}</Latin>
                {row === "(X)" && <><LibraryIcon /><NewBadge>NE</NewBadge></>}
              </DockItem>
            ))}
          </DockList>
        </Dock>
        <Editor>
          <Toolbar $height={27}>
            <ToolButton><NewIcon />新建<Caret /></ToolButton>
            <ToolButton $gap={4}><CrossIcon />删除</ToolButton>
            <ToolButton><CopyIcon />复制</ToolButton>
            <ToolButton><RenameIcon />重命名</ToolButton>
            <Divider $after={2} />
            <span>楼层</span>
            <Divider $after={7} />
            <SelectWrap $after={6}>
              <FloorSelect aria-label="楼层" defaultValue="首层"><option>首层</option></FloorSelect>
              <SelectCaret><Caret /></SelectCaret>
            </SelectWrap>
            <Divider />
            <ToolButton><SortIcon />排序<Caret /></ToolButton>
            <ToolButton><FilterIcon />过滤<Caret /></ToolButton>
            <Divider />
            <ToolButton><FloorCopyIcon />从其他楼层复制构件</ToolButton>
            <ToolButton><FloorCopyIcon />复制构件到其他楼层</ToolButton>
            <Divider />
            <ToolButton $gap={4}>查找<Caret /></ToolButton>
            <Divider $after={7} />
            <ToolButton $gap={6}><ArrowIcon />上移</ToolButton>
            <ToolButton $gap={6} $muted><ArrowIcon down />下移</ToolButton>
          </Toolbar>
          <Panels>
            <TreePanel>
              <SearchRow>
                <SearchInput placeholder="搜索构件..." aria-label="搜索构件" />
                <button type="button" aria-label="搜索"><MagnifierIcon color="#6da7dc" handle="left" /></button>
              </SearchRow>
              <Tree>
                <li>
                  <TreeRoot>
                    <Expander aria-label="折叠" />
                    <NodeBoxIcon />
                    <RootLabel>自定义线</RootLabel>
                  </TreeRoot>
                  <Branch>
                    <Leaf><GearIcon /><LeafName>ZDYX-1</LeafName></Leaf>
                    <Leaf><GearIcon /><LeafName $selected>ZDYX-2</LeafName></Leaf>
                  </Branch>
                </li>
              </Tree>
            </TreePanel>
            <PropertyPanel>
              <TabStrip><Tab>属性编辑</Tab></TabStrip>
              <SheetFrame>
                <Sheet>
                  <thead>
                    <tr>
                      <HeadCell $w={22} aria-label="序号" />
                      <HeadCell $w={191}>属性名称</HeadCell>
                      <HeadCell $w={127} $hot>属性值</HeadCell>
                      <HeadCell $w={30}>附加</HeadCell>
                    </tr>
                  </thead>
                </Sheet>
                <ScrollUp aria-label="向上滚动">
                  <Icon w={10} h={8} box="0 0 10 8"><path d="m1 6 4-4 4 4" stroke="#415a94" strokeWidth="2" /></Icon>
                </ScrollUp>
              </SheetFrame>
            </PropertyPanel>
          </Panels>
        </Editor>
      </Workspace>
    </MainWindow>

    <Browser>
      <Chrome>
        <AddressBar>
          <Url>http://www.<b>fwxgx.com</b>/question/giml/list</Url>
          <BarButton $after={7} aria-label="二维码"><QrIcon /></BarButton>
          <BarButton $after={2} aria-label="加速"><BoltIcon /></BarButton>
          <BarLine />
          <BarButton $after={0} aria-label="展开"><ChevronIcon /></BarButton>
          <BarLine />
          <BarButton $after={2} aria-label="百度"><PawIcon /></BarButton>
          <Caret $color="#555" />
          <Prompt>点此搜索</Prompt>
        </AddressBar>
        <Bookmarks>
          <BookmarkTail>安全</BookmarkTail>
          <Chevrons aria-label="更多书签">»</Chevrons>
          <Dots />
          {bookmarks.map(([name, icon]) => (
            <Bookmark key={name}>{icon}{name}<Caret $wide $color="#777" /></Bookmark>
          ))}
        </Bookmarks>
        <Tabs>
          <BackTab>
            <span>代安全上网导航</span>
            <button aria-label="关闭标签"><SmallCross color="#999" /></button>
          </BackTab>
          <FrontTab>
            <SiteIcon />
            <TabTitle>专业造价问题答疑平台-广联达服务</TabTitle>
            <button aria-label="关闭标签"><SmallCross color="#999" /></button>
          </FrontTab>
          <AddTab aria-label="新标签">+</AddTab>
          <TabList aria-label="标签列表"><TabListIcon /></TabList>
        </Tabs>
      </Chrome>
      <Page>
        <Question>
          <QuestionIcon />
          <QuestionLink href="#q1">一层外墙处的<Latin $size={12}>L-DT</Latin>标注怎么理解？是</QuestionLink>
          <CoinIcon />
          <Points>10</Points>
          <span><Latin>[</Latin>钢筋抽样<Latin>GGJ2013]</Latin></span>
        </Question>
        <Question>
          <QuestionIcon />
          <QuestionLink href="#q2">异形梁如何设置</QuestionLink>
          <CoinIcon />
          <Points>100</Points>
          <span><Latin>[</Latin>钢筋抽样<Latin>GGJ2013]</Latin></span>
        </Question>
        <Detail>
          <Meta>
            提问者：<a href="#user">学徒</a><i>|</i>悬赏分：<Digits>100</Digits>分<i>|</i>回答次数：<Digits>2</Digits>次
          </Meta>
          <Body>请问老师<Latin $size={12}>~~</Latin>图中异形梁如何画钢筋怎么设置啊</Body>
          <Figure><BeamDrawing /></Figure>
          <Notice>
            <div>今天再有 <b>1</b> 个问题被</div>
            <div>采纳，奖励贡献分 <b>5</b></div>
          </Notice>
          <Reply>
            <InsertPicture><PictureIcon />插入图片</InsertPicture>
            <ReplyBox />
          </Reply>
        </Detail>
      </Page>
    </Browser>

    <Dialog role="dialog" aria-label="多边形编辑器">
      <DialogTitle>
        多边形编辑器
        <CloseButton aria-label="关闭"><SmallCross color="#fff" size={8} /></CloseButton>
      </DialogTitle>
      <Toolbar $height={25}>
        <Grip />
        <ToolButton><GridIcon />定义网格</ToolButton>
        <Divider $after={7} />
        <ToolButton $muted $gap={4}><LineToolIcon />画直线</ToolButton>
        <ToolButton $muted $gap={4} $after={7}><ArcToolIcon />画弧</ToolButton>
        <ToolButton $muted $gap={4}><CircleToolIcon />画圆</ToolButton>
        <Divider />
        <ToolButton $gap={4}><CrossIcon />清除多边形</ToolButton>
        <Divider $after={7} />
        <ToolButton $gap={4}><UndoIcon />回退</ToolButton>
        <Divider />
        <ToolButton $gap={4} $after={7}><DiskIcon />导入</ToolButton>
        <ToolButton><DiskIcon out />导出</ToolButton>
        <Divider />
        <ToolButton $gap={4}><MagnifierIcon />查询多边形库</ToolButton>
      </Toolbar>
      <Toolbar $height={25}>
        <Grip />
        <Choice $after={10}><Radio type="radio" name="offset" defaultChecked />不偏移</Choice>
        <Choice $after={8}><Radio type="radio" name="offset" />正交</Choice>
        <Choice $after={14}><Radio type="radio" name="offset" />极坐标</Choice>
        <Divider $after={2} />
        <SpinField label="X" />
        <SpinField label="Y" />
      </Toolbar>
      <Drawing><PolygonDrawing /></Drawing>
      <StatusRow><DynamicInput>动态输入</DynamicInput></StatusRow>
      <ActionRow>
        <ActionButton $w={106} $after={22}>从<Latin>CAD</Latin>选择截面图</ActionButton>
        <ActionButton $w={114} $after={24}>在<Latin>CAD</Latin>中绘制截面图</ActionButton>
        <ActionButton $w={73} $after={14}>确定</ActionButton>
        <ActionButton $w={73}>取消</ActionButton>
      </ActionRow>
    </Dialog>

    <Annotations width="1425" height="729" fill="#fb0505" stroke="#fb0505">
      <path d="M152 126 524 352M1323 506 696 449" strokeWidth="3" />
      <path d="m536 360-18-5 7-11zM684 448l17-5-1 12z" stroke="none" />
    </Annotations>
  </Desktop>
);

export default App;
